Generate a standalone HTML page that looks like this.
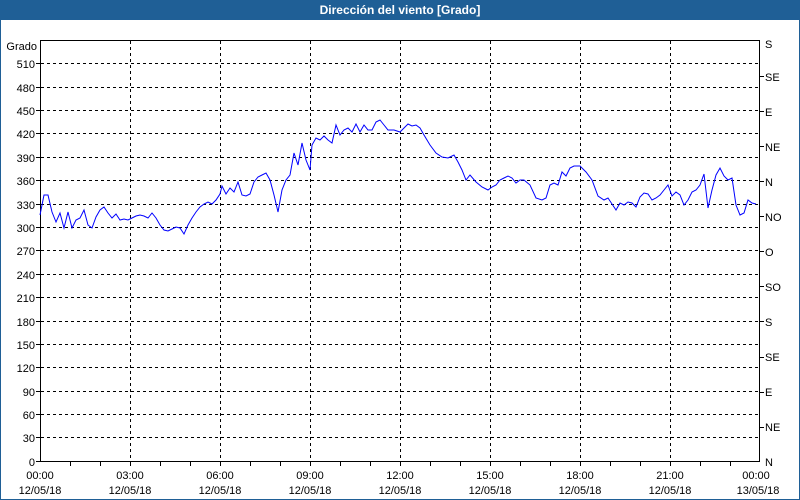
<!DOCTYPE html>
<html><head><meta charset="utf-8"><style>
body{margin:0;width:800px;height:500px;overflow:hidden;background:#fff}
svg{display:block}
text{font-family:"Liberation Sans","DejaVu Sans",sans-serif;font-size:11px;fill:#000}
</style></head><body>
<svg width="800" height="500" viewBox="0 0 800 500">
<rect x="0" y="0" width="800" height="500" fill="#fff"/>
<rect x="0.5" y="0.5" width="799" height="499" fill="none" stroke="#1f5f96" stroke-width="1"/>
<rect x="0" y="0" width="800" height="20" fill="#1f5f96"/>
<text x="400" y="14" text-anchor="middle" style="fill:#fff;font-weight:bold;font-size:12px">Dirección del viento [Grado]</text>
<g stroke="#000" stroke-dasharray="3,3" stroke-width="1">
<path d="M130.5 41V461M220.5 41V461M310.5 41V461M400.5 41V461M490.5 41V461M580.5 41V461M670.5 41V461"/>
<path d="M41 63.5H759M41 87.5H759M41 110.5H759M41 133.5H759M41 157.5H759M41 180.5H759M41 204.5H759M41 227.5H759M41 250.5H759M41 274.5H759M41 297.5H759M41 321.5H759M41 344.5H759M41 367.5H759M41 391.5H759M41 414.5H759M41 437.5H759"/>
</g>
<path d="M40.5 40.5H759.5V461.5H40.5Z" fill="none" stroke="#000"/>
<g stroke="#000">
<path d="M36 63.5H40M36 87.5H40M36 110.5H40M36 133.5H40M36 157.5H40M36 180.5H40M36 204.5H40M36 227.5H40M36 250.5H40M36 274.5H40M36 297.5H40M36 321.5H40M36 344.5H40M36 367.5H40M36 391.5H40M36 414.5H40M36 437.5H40M36 461.5H40"/>
<path d="M760 76.5H764M760 111.5H764M760 146.5H764M760 181.5H764M760 216.5H764M760 251.5H764M760 286.5H764M760 321.5H764M760 357.5H764M760 392.5H764M760 427.5H764"/>
<path d="M70.5 462V466M100.5 462V466M130.5 462V466M160.5 462V466M190.5 462V466M220.5 462V466M250.5 462V466M280.5 462V466M310.5 462V466M340.5 462V466M370.5 462V466M400.5 462V466M430.5 462V466M460.5 462V466M490.5 462V466M520.5 462V466M550.5 462V466M580.5 462V466M610.5 462V466M640.5 462V466M670.5 462V466M700.5 462V466M730.5 462V466"/>
</g>
<g text-anchor="end">
<text x="37" y="50">Grado</text>
<text x="35" y="68">510</text><text x="35" y="92">480</text><text x="35" y="115">450</text><text x="35" y="138">420</text><text x="35" y="162">390</text><text x="35" y="185">360</text><text x="35" y="209">330</text><text x="35" y="232">300</text><text x="35" y="255">270</text><text x="35" y="279">240</text><text x="35" y="302">210</text><text x="35" y="326">180</text><text x="35" y="349">150</text><text x="35" y="372">120</text><text x="35" y="396">90</text><text x="35" y="419">60</text><text x="35" y="442">30</text><text x="35" y="466">0</text>
</g>
<g>
<text x="765" y="48">S</text><text x="765" y="81">SE</text><text x="765" y="116">E</text><text x="765" y="151">NE</text><text x="765" y="186">N</text><text x="765" y="221">NO</text><text x="765" y="256">O</text><text x="765" y="291">SO</text><text x="765" y="326">S</text><text x="765" y="361">SE</text><text x="765" y="396">E</text><text x="765" y="431">NE</text><text x="765" y="466">N</text>
</g>
<g text-anchor="middle">
<text x="40" y="479">00:00</text><text x="130" y="479">03:00</text><text x="220" y="479">06:00</text><text x="310" y="479">09:00</text><text x="400" y="479">12:00</text><text x="490" y="479">15:00</text><text x="580" y="479">18:00</text><text x="670" y="479">21:00</text><text x="756" y="479">00:00</text>
<text x="40" y="494">12/05/18</text><text x="130" y="494">12/05/18</text><text x="220" y="494">12/05/18</text><text x="310" y="494">12/05/18</text><text x="400" y="494">12/05/18</text><text x="490" y="494">12/05/18</text><text x="580" y="494">12/05/18</text><text x="670" y="494">12/05/18</text><text x="758" y="494">13/05/18</text>
</g>
<polyline fill="none" stroke="#0000ff" stroke-width="1" points="40,215 44,195 48,195 52,212 56,222 60,213 64,228 68,212 72,228 76,220 80,218 84,210 88,225 92,228 96,217 100,210 104,207 108,213 112,218 116,214 120,220 124,219 128,220 132,218 136,216 140,215 144,216 148,218 152,213 156,218 160,225 164,230 168,231 172,229 176,227 180,228 184,234 188,225 192,218 196,212 200,207 204,204 208,202 212,204 216,200 220,194 222,186 226,194 230,188 234,192 238,182 242,195 246,196 250,194 254,182 258,177 262,175 266,173 270,180 274,195 278,212 282,190 286,180 290,175 294,153 298,165 302,143 306,160 310,170 312,145 316,138 320,140 324,136 328,140 332,143 336,125 340,135 344,130 348,128 352,132 356,124 360,132 364,125 368,130 372,130 376,122 380,120 384,125 388,130 390,130 394,130 400,132 404,128 408,124 412,126 416,125 420,128 424,135 430,145 436,153 442,157 448,158 454,155 458,162 462,170 466,180 470,175 476,182 482,187 488,190 492,187 496,185 500,180 504,178 508,176 512,178 516,183 520,180 524,180 530,185 536,198 542,200 546,198 550,185 554,183 558,185 562,172 566,176 570,168 574,166 580,166 586,172 592,180 598,196 604,200 608,198 612,204 616,210 620,203 624,205 628,202 632,203 636,207 640,197 644,193 648,194 652,200 656,198 660,195 664,190 668,185 672,196 676,192 680,195 684,205 688,200 692,192 696,190 700,185 704,174 708,208 712,190 716,175 720,168 724,176 728,180 732,178 736,205 740,215 744,213 748,200 752,203 756,204"/>
</svg>
</body></html>
